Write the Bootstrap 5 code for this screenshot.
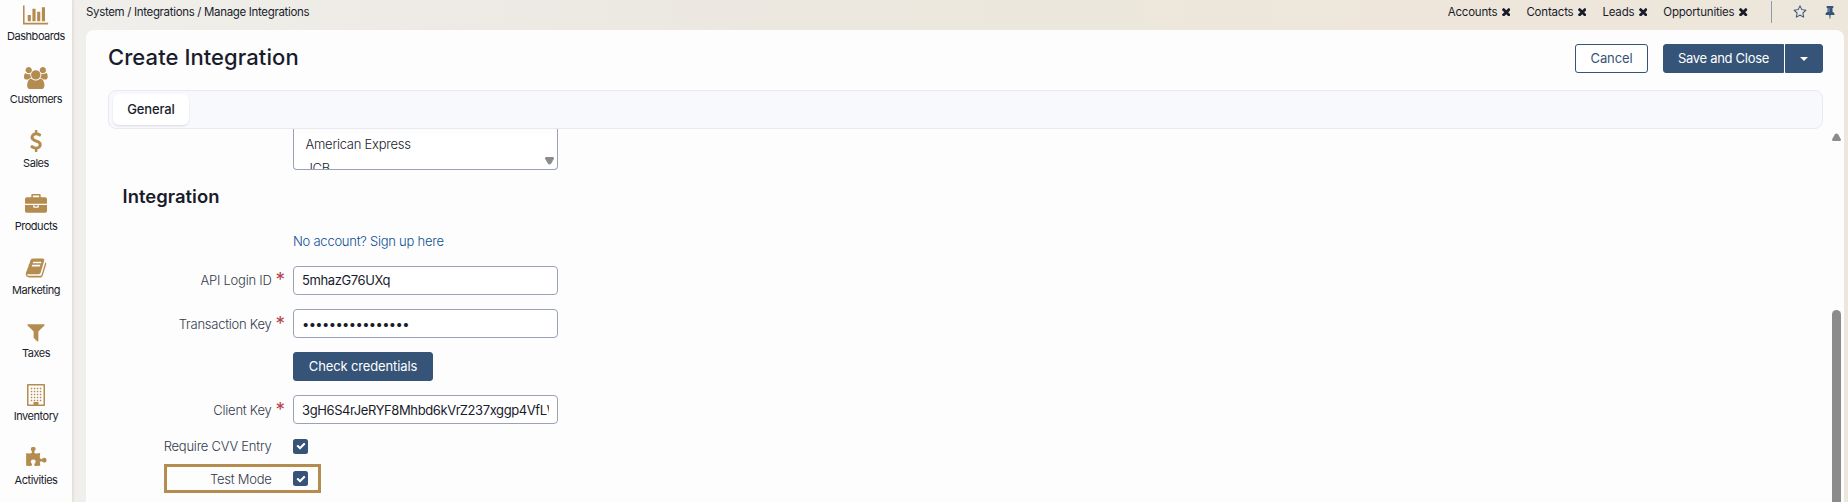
<!DOCTYPE html>
<html lang="en">
<head>
<meta charset="utf-8">
<meta name="viewport" content="width=device-width, initial-scale=1">
<title>Create Integration</title>
<link href="https://cdn.jsdelivr.net/npm/bootstrap@5.3.0/dist/css/bootstrap.min.css" rel="stylesheet">
<style>
:root{--gold:#b58c50;--navy:#355478;--ink:#191c2b}
body{font-family:Inter,"Liberation Sans",sans-serif;font-size:13px;font-weight:300;letter-spacing:-.25px;line-height:20px;color:var(--ink);background:linear-gradient(90deg,#f1f0ec 0,#ece8e2 35%,#ebe7dc 55%,#eee6da 75%,#ede6db 100%)}
.app{height:502px;overflow:hidden}
.side{width:72px;background:#fdfdfd;box-shadow:1px 0 3px rgba(60,50,30,.12);padding-top:3.6px}
.side a{height:63.4px;flex:none;color:var(--ink);font-size:11px;font-weight:400;letter-spacing:-.46px;line-height:15px}
.side svg{height:22px;fill:var(--gold);margin-bottom:3.5px;flex:none}
.main{padding:0 4px 0 14px;min-width:0}
.topbar{height:30px;font-size:11.5px;font-weight:400;letter-spacing:-.2px;padding:0 7px 6px 0}
.topbar svg{fill:var(--ink);flex:none}
.topbar .act{width:14px;height:14px;fill:var(--navy)}
.crumbs{letter-spacing:-.33px}
.pinned{margin-right:16px}
.pinned svg{margin-left:4.5px;width:8.500px;height:8.500px}
.vline{width:1px;height:22px;background:#8c9bb0;margin:0 21.500px 0 7px}
.panel{background:#fdfdfd;border-radius:8px 8px 0 0;padding:0 21px 0 22px;min-height:0}
.head{height:60px;padding-top:14px}
h1{font-size:22px;font-weight:500;line-height:30px;margin:-2px 0 0;letter-spacing:.07px}
.btn{--bs-btn-border-radius:3px;--bs-btn-font-size:13px;--bs-btn-padding-y:0;--bs-btn-padding-x:0;height:29px;line-height:27px}
.btn-navy{--bs-btn-color:#fff;--bs-btn-bg:#355478;--bs-btn-border-color:#355478}
.btn-line{--bs-btn-color:#355478;--bs-btn-bg:#fff;--bs-btn-border-color:#355478;width:73px;letter-spacing:-.1px}
.actions{margin-left:15px}
.btn-save{width:121px;letter-spacing:-.3px}
.btn-more{width:38px;margin-left:1px!important}
.btn-check-cred{width:140px;letter-spacing:-.13px}
.tabs{height:39px;background:#f8f9fc;border:1px solid #e9eaf0;border-radius:8px;padding:3px 4px}
.tabs .nav-link{width:76px;height:31px;line-height:31px;padding:0;text-align:center;background:#fff;border-radius:6px;color:var(--ink);font-weight:500;letter-spacing:-.15px;box-shadow:0 1px 2px rgba(30,40,60,.14)}
.listbox{margin-left:185px;width:265px;height:41px;border:1px solid #9aa2b6;border-top:0;border-radius:0 0 4px 4px;background:#fff;overflow:hidden;padding:5px 0 0 11.500px;position:relative}
.listbox::before{content:"";position:absolute;left:-1px;right:-1px;top:0;height:10px;background:linear-gradient(#fdfdfd,#fdfdfd00);border:0}
.listbox div{height:24px}
.listbox svg{position:absolute;right:3px;bottom:4px}
h2{font-size:18.400px;font-weight:600;line-height:24px;margin:14px 0 0 14.500px;letter-spacing:.05px}
.frm{margin-top:15px}
.frow{display:grid;grid-template-columns:163.500px 21.500px 265px;align-items:center;height:43px}
.frow.r-link{height:35px}
.frow.r-first{height:44px}
.frow.r-check{height:30px}
.lbl{color:#343a4b;text-align:right;white-space:nowrap}
.req{color:#b5434f;font-size:19px;font-weight:400;line-height:20px;height:20px;padding-left:4px}
.form-control{height:29px;padding:0 8px;font-size:13px;font-weight:400;letter-spacing:-.4px;border:1px solid #9aa2b6;border-radius:4px;color:var(--ink);background:#fff;font-family:inherit}
.dots{letter-spacing:-.630px}
.tick{width:15px;height:15px;border-radius:2.500px;background:var(--navy)}
.tick svg{width:10px;height:10px;fill:#fff}
.marked{width:157px;height:29px;border:3px solid var(--gold);margin:3px 0 0 56px}
.marked .lbl{width:104.500px;margin-right:21.500px}
.lnk{color:#0d4f94}
.bar{width:9px;margin:4px -18px 0 9px;flex:none}
.thumb{height:210px;background:#8b8b8b;border-radius:5px;margin-top:169px}
</style>
</head>
<body>
<div class="app d-flex">
  <nav class="side d-flex flex-column flex-shrink-0">
    <a class="d-flex flex-column align-items-center text-decoration-none"><svg viewBox="0 0 2048 1792"><path d="M640 896v512h-256v-512h256zM1024 384v1024h-256v-1024h256zM2048 1536v128h-2048v-1536h128v1408h1920zM1408 640v768h-256v-768h256zM1792 256v1152h-256v-1152h256z"/></svg><span>Dashboards</span></a>
    <a class="d-flex flex-column align-items-center text-decoration-none"><svg viewBox="0 0 1920 1792"><path d="M593 896q-162 5-265 128h-134q-82 0-138-40.500t-56-118.500q0-353 124-353 6 0 43.500 21t97.500 42.500 119 21.500q67 0 133-23-5 37-5 66 0 159 93 286zM1664 1533q0 120-73 189.500t-194 69.500h-874q-121 0-194-69.500t-73-189.500q0-53 3.500-103.500t14-109 26.500-108.500 43-97.500 62-81 85.500-53.500 111.500-20q10 0 43 21.500t73 48 107 48 135 21.500 135-21.500 107-48 73-48 43-21.500q61 0 111.500 20t85.500 53.500 62 81 43 97.500 26.500 108.500 14 109 3.500 103.500zM640 256q0 106-75 181t-181 75-181-75-75-181 75-181 181-75 181 75 75 181zM1344 640q0 159-112.500 271.500t-271.500 112.500-271.500-112.500-112.500-271.500 112.500-271.500 271.500-112.500 271.500 112.500 112.500 271.500zM1920 865q0 78-56 118.500t-138 40.500h-134q-103-123-265-128 93-127 93-286 0-29-5-66 66 23 133 23 59 0 119-21.500t97.500-42.500 43.500-21q124 0 124 353zM1792 256q0 106-75 181t-181 75-181-75-75-181 75-181 181-75 181 75 75 181z"/></svg><span>Customers</span></a>
    <a class="d-flex flex-column align-items-center text-decoration-none"><svg viewBox="0 0 1792 1792"><path d="M1362 1185q0 153-99.500 263.500t-258.500 136.500v175q0 14-9 23t-23 9h-135q-13 0-22.500-9.500t-9.500-22.500v-175q-66-9-127.500-31t-101.500-44.500-74-48-46.500-37.500-17.500-18q-17-21-2-41l103-135q7-10 23-12 15-2 24 9l2 2q113 99 243 125 37 8 74 8 81 0 142.500-43t61.500-122q0-28-15-53t-33.500-42-58.500-37.500-66-32-80-32.500q-39-16-61.500-25t-61.500-26.500-62.500-31-56.500-35.500-53.500-42.500-43.500-49-35.500-58-21-66.500-8.500-78q0-138 98-242t255-134v-180q0-13 9.500-22.500t22.500-9.500h135q14 0 23 9t9 23v176q57 6 110.500 23t87 33.500 63.500 37.500 39 29 15 14q17 18 5 38l-81 146q-8 15-23 16-14 3-27-7-3-3-14.500-12t-39-26.500-58.500-32-74.500-26-85.500-11.500q-95 0-155 43t-60 111q0 26 8.500 48t29.500 41.500 39.500 33 56 31 60.500 27 70 27.500q53 20 81 31.500t76 35 75.500 42.500 62 50 53 63.500 31.500 76.500 13 94z"/></svg><span>Sales</span></a>
    <a class="d-flex flex-column align-items-center text-decoration-none"><svg viewBox="0 0 1792 1792"><path d="M640 256h512v-128h-512v128zM1792 896v480q0 66-47 113t-113 47h-1472q-66 0-113-47t-47-113v-480h672v160q0 26 19 45t45 19h320q26 0 45-19t19-45v-160h672zM1024 896v128h-256v-128h256zM1792 416v384h-1792v-384q0-66 47-113t113-47h352v-160q0-40 28-68t68-28h576q40 0 68 28t28 68v160h352q66 0 113 47t47 113z"/></svg><span>Products</span></a>
    <a class="d-flex flex-column align-items-center text-decoration-none"><svg viewBox="0 0 1792 1792"><path d="M1703 478q40 57 18 129l-275 906q-19 64-76.500 107.500t-122.500 43.500h-923q-77 0-148.500-53.500t-99.500-131.500q-24-67-2-127 0-4 3-27t4-37q1-8-3-21.500t-3-19.500q2-11 8-21t16.500-23.500 16.500-23.500q23-38 45-91.500t30-91.500q3-10 .5-30t-.5-28q3-11 17-28t17-23q21-36 42-92t25-90q1-9-2.500-32t.5-28q4-13 22-30.500t22-22.500q19-26 42.500-84.500t27.500-96.500q1-8-3-25.500t-2-26.500q2-8 9-18t18-23 17-21q8-12 16.500-30.500t15-35 16-36 19.500-32 26.500-23.500 36-11.500 47.500 5.500l-1 3q38-9 51-9h761q74 0 114 56t18 130l-274 906q-36 119-71.500 153.500t-128.500 34.500h-869q-27 0-38 15-11 16-1 43 24 70 144 70h923q29 0 56-15.500t35-41.500l300-987q7-22 5-57 38 15 59 43zm-1064 2q-4 13 2 22.500t20 9.500h608q13 0 25.500-9.500t16.500-22.500l21-64q4-13-2-22.500t-20-9.500h-608q-13 0-25.500 9.500t-16.500 22.500zm-83 256q-4 13 2 22.500t20 9.500h608q13 0 25.500-9.500t16.500-22.500l21-64q4-13-2-22.500t-20-9.500h-608q-13 0-25.500 9.500t-16.500 22.500z"/></svg><span>Marketing</span></a>
    <a class="d-flex flex-column align-items-center text-decoration-none"><svg viewBox="0 0 1792 1792"><path d="M1595 295q17 41-14 70l-493 493v742q0 42-39 59-13 5-25 5-27 0-45-19l-256-256q-19-19-19-45v-486l-493-493q-31-29-14-70 17-39 59-39h1280q42 0 59 39z"/></svg><span>Taxes</span></a>
    <a class="d-flex flex-column align-items-center text-decoration-none"><svg viewBox="0 0 18 22"><path fill-rule="evenodd" d="M.7 0h16.600q.7 0 .7.700v20.600q0 .7-.7.700H.7q-.7 0-.7-.7V.7Q0 0 .7 0zM1.500 1.500v19H6.500V18h5v2.500h5v-19z"/><path stroke="#b58c50" stroke-width="1.500" stroke-dasharray="1.500 1.500" d="M3.800 4.500h11M3.800 7.500h11M3.800 10.500h11M3.800 13.500h11M3.800 16.500h11"/></svg><span>Inventory</span></a>
    <a class="d-flex flex-column align-items-center text-decoration-none"><svg viewBox="0 0 1792 1792"><path d="M1755 1083q0 81-44.500 135t-123.500 54q-41 0-77.500-17.500t-59-38-56.500-38-71-17.500q-110 0-110 124 0 39 16 115t15 115v5q-22 0-33 1-34 3-97.500 11.500t-115.500 13.500-98 5q-61 0-103-26.500t-42-83.500q0-37 17.500-71t38-56.500 38-59 17.500-77.500q0-79-54-123.500t-135-44.500q-84 0-143 45.500t-59 127.500q0 43 15 83t33.500 64.500 33.500 53 15 50.500q0 45-46 89-37 35-117 35-95 0-245-24-9-2-27.500-4t-27.500-4l-13-2q-1 0-3-1-2 0-2-1v-1024q2 1 17.500 3.500t34 5 21.500 3.500q150 24 245 24 80 0 117-35 46-44 46-89 0-22-15-50.500t-33.500-53-33.500-64.500-15-83q0-82 59-127.500t144-45.500q80 0 134 44.500t54 123.500q0 41-17.500 77.500t-38 59-38 56.500-17.500 71q0 57 42 83.500t103 26.500q64 0 180-15t163-17v2q-1 2-3.500 17.500t-5 34-3.500 21.500q-24 150-24 245 0 80 35 117 44 46 89 46 22 0 50.500-15t53-33.500 64.500-33.500 83-15q82 0 127.500 59t45.500 143z"/></svg><span>Activities</span></a>
  </nav>
  <div class="main flex-grow-1 d-flex flex-column">
    <svg width="0" height="0" class="d-none"><defs><symbol id="x" viewBox="300 300 1192 1192"><path d="M1490 1322q0 40-28 68l-136 136q-28 28-68 28t-68-28l-294-294-294 294q-28 28-68 28t-68-28l-136-136q-28-28-28-68t28-68l294-294-294-294q-28-28-28-68t28-68l136-136q28-28 68-28t68 28l294 294 294-294q28-28 68-28t68 28l136 136q28 28 28 68t-28 68l-294 294 294 294q28 28 28 68z" transform="translate(0 -64)"/></symbol>
    <symbol id="tk" viewBox="0 0 1792 1792"><path d="M1671 566q0 40-28 68l-724 724-136 136q-28 28-68 28t-68-28l-136-136-362-362q-28-28-28-68t28-68l136-136q28-28 68-28t68 28l294 295 656-657q28-28 68-28t68 28l136 136q28 28 28 68z"/></symbol></defs></svg>
    <header class="topbar d-flex align-items-center flex-shrink-0">
      <span class="crumbs me-auto">System / Integrations / Manage Integrations</span>
      <span class="pinned d-flex align-items-center">Accounts<svg><use href="#x"/></svg></span>
      <span class="pinned d-flex align-items-center">Contacts<svg><use href="#x"/></svg></span>
      <span class="pinned d-flex align-items-center">Leads<svg><use href="#x"/></svg></span>
      <span class="pinned d-flex align-items-center">Opportunities<svg><use href="#x"/></svg></span>
      <span class="vline"></span>
      <svg class="act" viewBox="64 0 1664 1792"><path d="M1201 1004l306-297-422-62-189-382-189 382-422 62 306 297-73 421 378-199 377 199zm527-357q0 22-26 48l-363 354 86 500q1 7 1 20 0 50-41 50-19 0-40-12l-449-236-449 236q-22 12-40 12-21 0-31.500-14.500t-10.500-35.500q0-6 2-20l86-500-364-354q-25-27-25-48 0-37 56-46l502-73 225-455q19-41 49-41t49 41l225 455 502 73q56 9 56 46z"/></svg>
      <svg class="act ms-3" viewBox="0 0 1792 1792"><path d="M800 864v-448q0-14-9-23t-23-9-23 9-9 23v448q0 14 9 23t23 9 23-9 9-23zm672 352q0 26-19 45t-45 19h-429l-51 483q-2 12-10.500 20.500t-20.500 8.500h-1q-27 0-32-27l-76-485h-404q-26 0-45-19t-19-45q0-123 78.500-221.500t177.500-98.500v-512q-52 0-90-38t-38-90 38-90 90-38h640q52 0 90 38t38 90-38 90-90 38v512q99 0 177.500 98.500t78.500 221.500z"/></svg>
    </header>
    <main class="panel flex-grow-1">
      <div class="head d-flex align-items-start">
        <h1>Create Integration</h1>
        <button class="btn btn-line ms-auto">Cancel</button>
        <div class="btn-group actions">
          <button class="btn btn-navy btn-save">Save and Close</button>
          <button class="btn btn-navy btn-more d-flex align-items-center justify-content-center"><svg width="8" height="4" viewBox="0 0 8 4"><path fill="#fff" d="M0 0h8L4 4z"/></svg></button>
        </div>
      </div>
      <div class="tabs nav"><a class="nav-link">General</a></div>
      <div class="d-flex">
        <div class="flex-grow-1">
          <div class="listbox"><div>American Express</div><div>JCB</div>
            <svg width="9" height="8" viewBox="0 0 9 8"><path fill="#8b8b8b" d="M1 0h7q1 .2 1 1.500L6.200 6.500q-1.700 2-3.400 0L0 1.500Q0 .2 1 0z"/></svg></div>
          <h2>Integration</h2>
          <div class="frm">
            <div class="frow r-link"><span></span><span></span><a class="lnk text-decoration-none">No account? Sign up here</a></div>
            <div class="frow r-first"><label class="lbl">API Login ID</label><span class="req">*</span><input class="form-control" value="5mhazG76UXq"></div>
            <div class="frow"><label class="lbl">Transaction Key</label><span class="req">*</span><input class="form-control dots" value="••••••••••••••••"></div>
            <div class="frow"><span></span><span></span><button class="btn btn-navy btn-check-cred">Check credentials</button></div>
            <div class="frow"><label class="lbl">Client Key</label><span class="req">*</span><input class="form-control" value="3gH6S4rJeRYF8Mhbd6kVrZ237xggp4VfLW"></div>
            <div class="frow r-check"><label class="lbl">Require CVV Entry</label><span></span><span class="tick d-flex align-items-center justify-content-center"><svg><use href="#tk"/></svg></span></div>
            <div class="marked d-flex align-items-center"><label class="lbl">Test Mode</label><span class="tick d-flex align-items-center justify-content-center"><svg><use href="#tk"/></svg></span></div>
          </div>
        </div>
        <div class="bar"><svg class="d-block" width="9" height="8" viewBox="0 0 9 8"><path fill="#8b8b8b" d="M1 8h7q1-.2 1-1.500L6.200 1.500q-1.700-2-3.400 0L0 6.500Q0 7.800 1 8z"/></svg><div class="thumb"></div></div>
      </div>
    </main>
  </div>
</div>
</body>
</html>
